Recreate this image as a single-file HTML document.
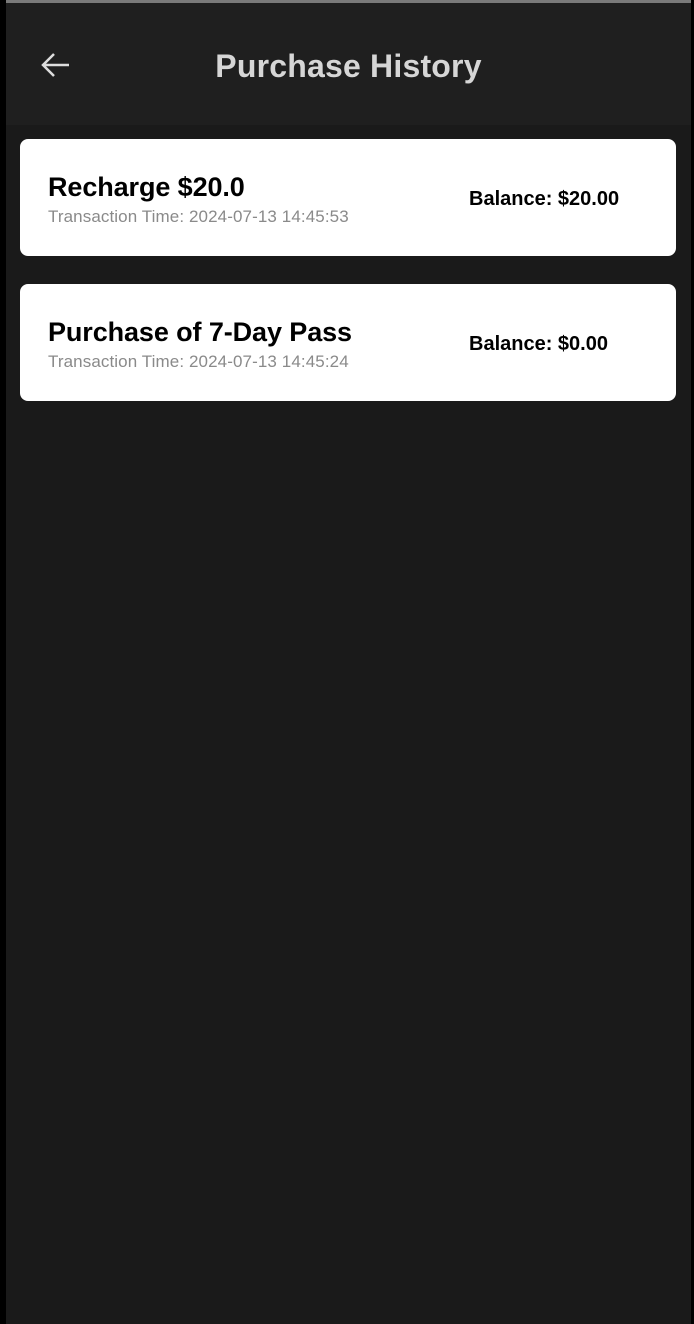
<!DOCTYPE html>
<html><head><meta charset="utf-8"><style>
*{margin:0;padding:0;box-sizing:border-box}
body{width:694px;height:1324px;background:#000;position:relative;overflow:hidden;font-family:"Liberation Sans",Arial,sans-serif}
.main{position:absolute;left:6px;top:0;width:685px;height:1324px;background:#1a1a1a}
.topbar{position:absolute;left:0;top:0;width:685px;height:3px;background:#7a7a7a}
.hdr{position:absolute;left:0;top:3px;width:685px;height:122px;background:#1f1f1f}
.title{position:absolute;left:0;width:685px;text-align:center;color:#d6d6d6;font-weight:bold;font-size:32px;letter-spacing:0.2px}
.back{position:absolute;left:33px;top:48px}
.card{position:absolute;left:14px;width:656px;height:117px;background:#fff;border-radius:8px}
.t1{position:absolute;left:28px;top:33px;font-size:27px;font-weight:bold;color:#000;letter-spacing:-0.1px}
.t2{position:absolute;left:28px;top:68px;font-size:17px;color:#8a8a8a;letter-spacing:0.1px}
.bal{position:absolute;left:449px;top:49px;font-size:20px;font-weight:bold;color:#000}
</style></head><body>
<div class="main">
<div class="topbar"></div>
<div class="hdr">
<svg class="back" width="32" height="28" viewBox="0 0 32 28"><path d="M30 14H4M15 3L4 14l11 11" fill="none" stroke="#ddd" stroke-width="2.5"/></svg>
<div class="title" style="top:45px">Purchase History</div>
</div>
<div class="card" style="top:139px"><div class="t1">Recharge $20.0</div><div class="t2">Transaction Time: 2024-07-13 14:45:53</div><div class="bal">Balance: $20.00</div></div>
<div class="card" style="top:284px"><div class="t1">Purchase of 7-Day Pass</div><div class="t2">Transaction Time: 2024-07-13 14:45:24</div><div class="bal">Balance: $0.00</div></div>
</div>
</body></html>
